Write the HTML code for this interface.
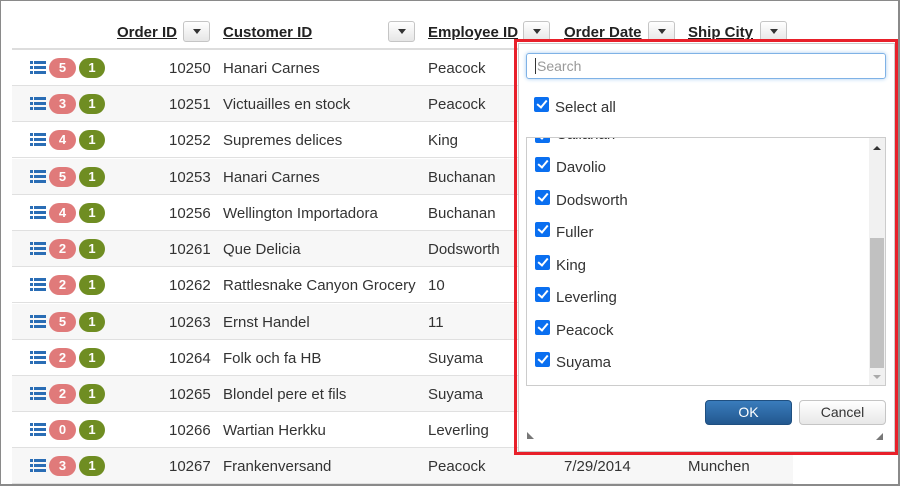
<!DOCTYPE html>
<html><head><meta charset="utf-8"><style>
*{box-sizing:border-box;margin:0;padding:0}
body{width:900px;height:486px;overflow:hidden;background:#fff;font-family:"Liberation Sans",Arial,sans-serif;font-size:15px;color:#333;position:relative}
.frame{position:absolute;left:0;top:0;width:900px;height:486px;border:1px solid #8a8a8a;border-right:2px solid #8a8a8a;border-bottom:2px solid #8a8a8a}
.hdr{position:absolute;top:24px;font-weight:bold;text-decoration:underline;color:#222;font-size:15px}
.fbtn{position:absolute;top:21px;width:27px;height:21px;border:1px solid #c5c5c5;border-radius:3px;background:linear-gradient(#fff,#e6e6e6)}
.fbtn:after{content:"";position:absolute;left:9px;top:7px;border-left:4px solid transparent;border-right:4px solid transparent;border-top:5px solid #333}
.hline{position:absolute;left:12px;top:48px;width:781px;height:2px;background:#ddd}
.row{position:absolute;left:12px;width:781px;height:36px;border-bottom:1px solid #e0e0e0}
.row.alt{background:#f7f7f7}
.c{position:absolute;top:10px;white-space:nowrap}
.ico{position:absolute;left:18px;top:11px;width:16px;height:13px}
.b{position:absolute;top:8px;height:20px;border-radius:10px;color:#fff;font-weight:bold;font-size:13px;text-align:center;line-height:20px}
.red{left:37px;width:27px;background:#e07a7a}
.grn{left:67px;width:26px;background:#6f8d22}
.redbox{position:absolute;left:514px;top:39px;width:384px;height:416px;border:3px solid #e8202a}
.panel{position:absolute;left:518px;top:43px;width:377px;height:409px;border:1px solid #ccc;background:#fff}
.search{position:absolute;left:526px;top:53px;width:360px;height:26px;border:1px solid #7fb2e6;border-radius:3px;box-shadow:0 0 4px #a8cdf0;color:#999;font-size:14px;padding:5px 8px;line-height:15px}
.cb{position:absolute;width:15px;height:15px;background:#0a6ff0;border-radius:2px}
.cb:after{content:"";position:absolute;left:5px;top:1px;width:4px;height:8px;border:solid #fff;border-width:0 2px 2px 0;transform:rotate(40deg)}
.lbl{position:absolute;font-size:15px;color:#333}
.list{position:absolute;left:526px;top:137px;width:360px;height:249px;border:1px solid #ccc;overflow:hidden}
.sb{position:absolute;right:0;top:0;width:16px;height:247px;background:#f1f1f1}
.thumb{position:absolute;left:1px;top:100px;width:14px;height:130px;background:#c1c1c1}
.btn{position:absolute;top:400px;height:25px;border-radius:4px;text-align:center;line-height:23px;font-size:14px}
</style></head><body>
<div class="frame"></div>
<div class="hdr" style="left:117px">Order ID</div><div class="fbtn" style="left:183px"></div>
<div class="hdr" style="left:223px">Customer ID</div><div class="fbtn" style="left:388px"></div>
<div class="hdr" style="left:428px">Employee ID</div><div class="fbtn" style="left:523px"></div>
<div class="hdr" style="left:564px">Order Date</div><div class="fbtn" style="left:648px"></div>
<div class="hdr" style="left:688px">Ship City</div><div class="fbtn" style="left:760px"></div>
<div class="hline"></div>

<div class="row" style="top:50px"><svg class="ico" viewBox="0 0 16 13"><g fill="#2a6db5"><rect x="0" y="0" width="3" height="3"/><rect x="4" y="0" width="12" height="3"/><rect x="0" y="5" width="3" height="3"/><rect x="4" y="5" width="12" height="3"/><rect x="0" y="10" width="3" height="3"/><rect x="4" y="10" width="12" height="3"/></g></svg><div class="b red">5</div><div class="b grn">1</div><div class="c" style="left:157px">10250</div><div class="c" style="left:211px">Hanari Carnes</div><div class="c" style="left:416px">Peacock</div></div>
<div class="row alt" style="top:86px"><svg class="ico" viewBox="0 0 16 13"><g fill="#2a6db5"><rect x="0" y="0" width="3" height="3"/><rect x="4" y="0" width="12" height="3"/><rect x="0" y="5" width="3" height="3"/><rect x="4" y="5" width="12" height="3"/><rect x="0" y="10" width="3" height="3"/><rect x="4" y="10" width="12" height="3"/></g></svg><div class="b red">3</div><div class="b grn">1</div><div class="c" style="left:157px">10251</div><div class="c" style="left:211px">Victuailles en stock</div><div class="c" style="left:416px">Peacock</div></div>
<div class="row" style="top:122px"><svg class="ico" viewBox="0 0 16 13"><g fill="#2a6db5"><rect x="0" y="0" width="3" height="3"/><rect x="4" y="0" width="12" height="3"/><rect x="0" y="5" width="3" height="3"/><rect x="4" y="5" width="12" height="3"/><rect x="0" y="10" width="3" height="3"/><rect x="4" y="10" width="12" height="3"/></g></svg><div class="b red">4</div><div class="b grn">1</div><div class="c" style="left:157px">10252</div><div class="c" style="left:211px">Supremes delices</div><div class="c" style="left:416px">King</div></div>
<div class="row alt" style="top:159px"><svg class="ico" viewBox="0 0 16 13"><g fill="#2a6db5"><rect x="0" y="0" width="3" height="3"/><rect x="4" y="0" width="12" height="3"/><rect x="0" y="5" width="3" height="3"/><rect x="4" y="5" width="12" height="3"/><rect x="0" y="10" width="3" height="3"/><rect x="4" y="10" width="12" height="3"/></g></svg><div class="b red">5</div><div class="b grn">1</div><div class="c" style="left:157px">10253</div><div class="c" style="left:211px">Hanari Carnes</div><div class="c" style="left:416px">Buchanan</div></div>
<div class="row" style="top:195px"><svg class="ico" viewBox="0 0 16 13"><g fill="#2a6db5"><rect x="0" y="0" width="3" height="3"/><rect x="4" y="0" width="12" height="3"/><rect x="0" y="5" width="3" height="3"/><rect x="4" y="5" width="12" height="3"/><rect x="0" y="10" width="3" height="3"/><rect x="4" y="10" width="12" height="3"/></g></svg><div class="b red">4</div><div class="b grn">1</div><div class="c" style="left:157px">10256</div><div class="c" style="left:211px">Wellington Importadora</div><div class="c" style="left:416px">Buchanan</div></div>
<div class="row alt" style="top:231px"><svg class="ico" viewBox="0 0 16 13"><g fill="#2a6db5"><rect x="0" y="0" width="3" height="3"/><rect x="4" y="0" width="12" height="3"/><rect x="0" y="5" width="3" height="3"/><rect x="4" y="5" width="12" height="3"/><rect x="0" y="10" width="3" height="3"/><rect x="4" y="10" width="12" height="3"/></g></svg><div class="b red">2</div><div class="b grn">1</div><div class="c" style="left:157px">10261</div><div class="c" style="left:211px">Que Delicia</div><div class="c" style="left:416px">Dodsworth</div></div>
<div class="row" style="top:267px"><svg class="ico" viewBox="0 0 16 13"><g fill="#2a6db5"><rect x="0" y="0" width="3" height="3"/><rect x="4" y="0" width="12" height="3"/><rect x="0" y="5" width="3" height="3"/><rect x="4" y="5" width="12" height="3"/><rect x="0" y="10" width="3" height="3"/><rect x="4" y="10" width="12" height="3"/></g></svg><div class="b red">2</div><div class="b grn">1</div><div class="c" style="left:157px">10262</div><div class="c" style="left:211px">Rattlesnake Canyon Grocery</div><div class="c" style="left:416px">10</div></div>
<div class="row alt" style="top:304px"><svg class="ico" viewBox="0 0 16 13"><g fill="#2a6db5"><rect x="0" y="0" width="3" height="3"/><rect x="4" y="0" width="12" height="3"/><rect x="0" y="5" width="3" height="3"/><rect x="4" y="5" width="12" height="3"/><rect x="0" y="10" width="3" height="3"/><rect x="4" y="10" width="12" height="3"/></g></svg><div class="b red">5</div><div class="b grn">1</div><div class="c" style="left:157px">10263</div><div class="c" style="left:211px">Ernst Handel</div><div class="c" style="left:416px">11</div></div>
<div class="row" style="top:340px"><svg class="ico" viewBox="0 0 16 13"><g fill="#2a6db5"><rect x="0" y="0" width="3" height="3"/><rect x="4" y="0" width="12" height="3"/><rect x="0" y="5" width="3" height="3"/><rect x="4" y="5" width="12" height="3"/><rect x="0" y="10" width="3" height="3"/><rect x="4" y="10" width="12" height="3"/></g></svg><div class="b red">2</div><div class="b grn">1</div><div class="c" style="left:157px">10264</div><div class="c" style="left:211px">Folk och fa HB</div><div class="c" style="left:416px">Suyama</div></div>
<div class="row alt" style="top:376px"><svg class="ico" viewBox="0 0 16 13"><g fill="#2a6db5"><rect x="0" y="0" width="3" height="3"/><rect x="4" y="0" width="12" height="3"/><rect x="0" y="5" width="3" height="3"/><rect x="4" y="5" width="12" height="3"/><rect x="0" y="10" width="3" height="3"/><rect x="4" y="10" width="12" height="3"/></g></svg><div class="b red">2</div><div class="b grn">1</div><div class="c" style="left:157px">10265</div><div class="c" style="left:211px">Blondel pere et fils</div><div class="c" style="left:416px">Suyama</div></div>
<div class="row" style="top:412px"><svg class="ico" viewBox="0 0 16 13"><g fill="#2a6db5"><rect x="0" y="0" width="3" height="3"/><rect x="4" y="0" width="12" height="3"/><rect x="0" y="5" width="3" height="3"/><rect x="4" y="5" width="12" height="3"/><rect x="0" y="10" width="3" height="3"/><rect x="4" y="10" width="12" height="3"/></g></svg><div class="b red">0</div><div class="b grn">1</div><div class="c" style="left:157px">10266</div><div class="c" style="left:211px">Wartian Herkku</div><div class="c" style="left:416px">Leverling</div></div>
<div class="row alt" style="top:448px"><svg class="ico" viewBox="0 0 16 13"><g fill="#2a6db5"><rect x="0" y="0" width="3" height="3"/><rect x="4" y="0" width="12" height="3"/><rect x="0" y="5" width="3" height="3"/><rect x="4" y="5" width="12" height="3"/><rect x="0" y="10" width="3" height="3"/><rect x="4" y="10" width="12" height="3"/></g></svg><div class="b red">3</div><div class="b grn">1</div><div class="c" style="left:157px">10267</div><div class="c" style="left:211px">Frankenversand</div><div class="c" style="left:416px">Peacock</div><div class="c" style="left:552px">7/29/2014</div><div class="c" style="left:676px">Munchen</div></div>

<div class="redbox"></div>
<div class="panel"></div>
<div class="search"><span style="border-left:1px solid #333;padding-left:1px">Search</span></div>
<div class="cb" style="left:534px;top:97px"></div><div class="lbl" style="left:555px;top:99px">Select all</div>
<div class="list">
  <div class="cb" style="left:8px;top:-10px"></div><div class="lbl" style="left:29px;top:-12px">Callahan</div>
  <div class="cb" style="left:8px;top:19px"></div><div class="lbl" style="left:29px;top:21px">Davolio</div>
  <div class="cb" style="left:8px;top:52px"></div><div class="lbl" style="left:29px;top:54px">Dodsworth</div>
  <div class="cb" style="left:8px;top:84px"></div><div class="lbl" style="left:29px;top:86px">Fuller</div>
  <div class="cb" style="left:8px;top:117px"></div><div class="lbl" style="left:29px;top:119px">King</div>
  <div class="cb" style="left:8px;top:149px"></div><div class="lbl" style="left:29px;top:151px">Leverling</div>
  <div class="cb" style="left:8px;top:182px"></div><div class="lbl" style="left:29px;top:184px">Peacock</div>
  <div class="cb" style="left:8px;top:214px"></div><div class="lbl" style="left:29px;top:216px">Suyama</div>
  <div class="sb"><div style="position:absolute;left:4px;top:8px;border-left:4px solid transparent;border-right:4px solid transparent;border-bottom:4px solid #333"></div><div class="thumb"></div><div style="position:absolute;left:4px;top:237px;border-left:4px solid transparent;border-right:4px solid transparent;border-top:4px solid #aaa"></div></div>
</div>
<div class="btn" style="left:705px;width:87px;background:linear-gradient(#3a7cbc,#23588f);border:1px solid #1f4f80;color:#fff">OK</div>
<div class="btn" style="left:799px;width:87px;background:linear-gradient(#fff,#e8e8e8);border:1px solid #c5c5c5;color:#333">Cancel</div>
<div style="position:absolute;left:527px;top:432px;width:0;height:0;border-top:7px solid #777;border-right:7px solid transparent;transform:rotate(-90deg)"></div>
<div style="position:absolute;left:876px;top:433px;width:0;height:0;border-bottom:7px solid #777;border-left:7px solid transparent"></div>
</body></html>
